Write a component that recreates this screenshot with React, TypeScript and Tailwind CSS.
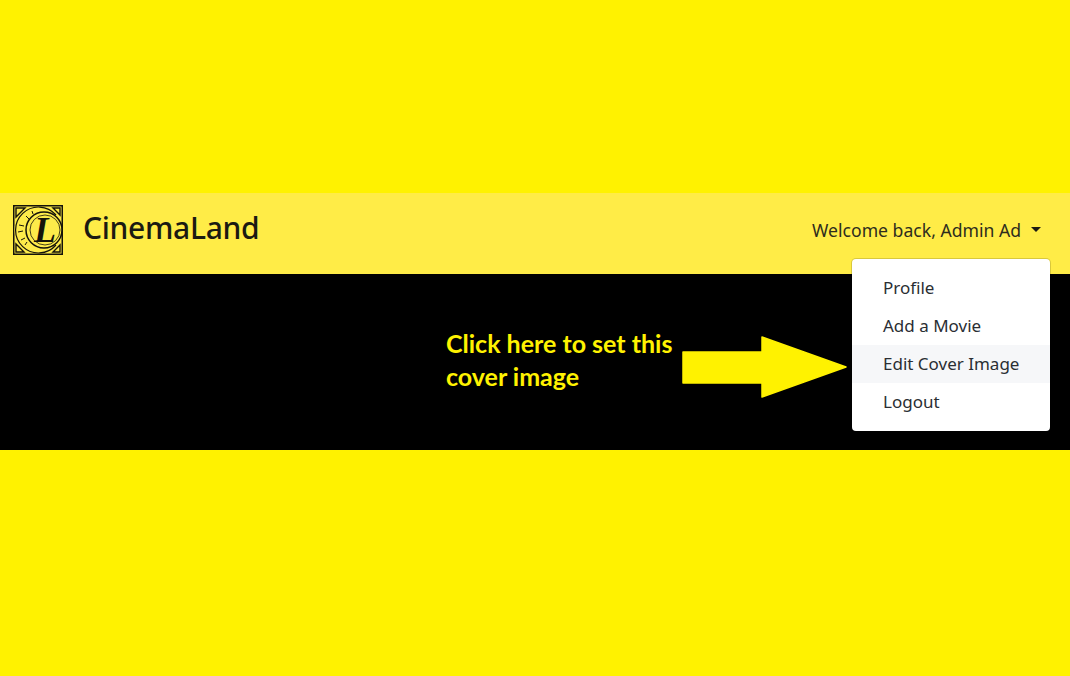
const menuItems = ["Profile", "Add a Movie", "Edit Cover Image", "Logout"];

function Logo() {
  return (
    <svg width="50" height="50" viewBox="0 0 50 50" className="shrink-0">
      <rect x="0.75" y="0.75" width="48.5" height="48.5" fill="#fdeb4a" stroke="#15130a" strokeWidth="1.5" />
      <path d="M3 3h9L3 12zM47 47h-7l7-7zM3 47v-8l8 8zM47 3v7l-7-7z" fill="none" stroke="#15130a" strokeWidth="1.4" />
      <circle cx="24" cy="25" r="22.5" fill="#fdeb4a" />
      <path d="M43 10A23 23 0 1 0 43 40" fill="none" stroke="#15130a" strokeWidth="1.2" />
      <path d="M6 20l5 1M5 27l5-1M8 35l4-2M13 11l3 3M19 6l1 3M12 40l2-3" stroke="#15130a" strokeWidth="1" />
      <circle cx="31" cy="25" r="18" fill="#fdeb4a" stroke="#15130a" strokeWidth="1.5" />
      <circle cx="32" cy="25" r="15" fill="none" stroke="#15130a" strokeWidth="0.8" />
      <text x="32" y="37" textAnchor="middle" fontFamily="'Liberation Serif', serif" fontWeight="700" fontStyle="italic" fontSize="36" fill="#15130a">L</text>
    </svg>
  );
}

function Arrow() {
  return (
    <svg width="168" height="62" viewBox="0 0 168 62" className="shrink-0">
      <path d="M1 16H80V1L164 31 80 61V47H1z" fill="#fff200" stroke="#fff200" strokeWidth="1.5" strokeLinejoin="round" />
    </svg>
  );
}

export default function App() {
  return (
    <div className="flex h-[676px] w-full flex-col overflow-hidden bg-[#fff200] font-['Noto_Sans',sans-serif]">
      <div className="h-[193px]" />
      <nav className="flex h-[81px] items-start justify-between bg-[#ffec47] pl-[13px] pr-[29px] pt-[12px]">
        <div className="flex items-center gap-[20px]">
          <Logo />
          <span className="-mt-[4px] text-[30px] leading-none font-medium tracking-[-0.3px] text-[#1b1a12]">CinemaLand</span>
        </div>
        <div className="mt-[11px] flex items-center gap-[10px] text-[17.6px] leading-[28px] text-[#2e2c1d]">
          <span>Welcome back, Admin Ad</span>
          <span className="h-0 w-0 -translate-y-[1px] border-x-[5px] border-t-[5px] border-x-transparent border-t-[#1b1a12]" />
        </div>
      </nav>
      <section className="relative flex h-[176px] items-start bg-black pl-[446px] pt-[53px]">
        <p className="w-[236px] font-['Lato',sans-serif] text-[25px] leading-[33px] font-bold text-[#fff200]">
          Click here to set this cover image
        </p>
        <div className="mt-[9px]">
          <Arrow />
        </div>
        <ul className="absolute left-[852px] top-[-15px] w-[198px] rounded-[4px] bg-white py-[10px] text-[17px] text-[#2a2e33] ring-1 ring-black/15">
          {menuItems.map((item) => (
            <li
              key={item}
              className={`flex h-[38px] items-center px-[31px] whitespace-nowrap ${item === "Edit Cover Image" ? "bg-[#f6f7f9]" : ""}`}
            >
              {item}
            </li>
          ))}
        </ul>
      </section>
    </div>
  );
}
